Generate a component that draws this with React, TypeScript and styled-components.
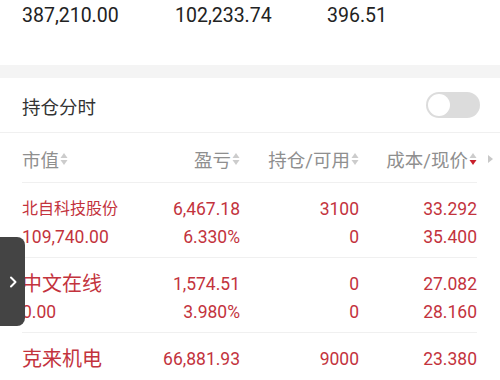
import styled, { createGlobalStyle } from "styled-components";

const GlobalStyle = createGlobalStyle`
  html, body {
    margin: 0;
    padding: 0;
    background: #ffffff;
  }
  body {
    font-family: Roboto, "Noto Sans CJK SC", sans-serif;
    -webkit-font-smoothing: antialiased;
  }
`;

const RED = "#c3333d";

const Page = styled.div`
  position: relative;
  width: 500px;
  height: 380px;
  overflow: hidden;
  background: #ffffff;
`;

const Summary = styled.div`
  display: grid;
  grid-template-columns: 153px 152px 1fr;
  padding: 3px 0 0 22px;
  height: 65px;
  box-sizing: border-box;
`;

const SummaryValue = styled.div`
  font-size: 19.5px;
  line-height: 26px;
  color: #222222;
`;

const Band = styled.div`
  height: 13px;
  background: #f4f4f4;
`;

const ToggleRow = styled.div`
  display: flex;
  align-items: center;
  justify-content: space-between;
  height: 55px;
  padding: 0 20px 0 22px;
  border-bottom: 1px solid #f0f0f0;
  box-sizing: border-box;
`;

const ToggleLabel = styled.div`
  font-size: 18.5px;
  color: #333333;
  padding-top: 2px;
`;

const Switch = styled.div`
  position: relative;
  width: 54px;
  height: 26px;
  border-radius: 13px;
  background: #dcdcdc;
`;

const Knob = styled.div`
  position: absolute;
  top: 2px;
  left: 2px;
  width: 22px;
  height: 22px;
  border-radius: 50%;
  background: #ffffff;
`;

const Table = styled.div`
  padding: 0 23px 0 22px;
`;

const HeadRow = styled.div`
  display: grid;
  grid-template-columns: 120px 98px 119px 118px;
  align-items: center;
  height: 50px;
  padding-top: 2px;
  box-sizing: border-box;
  border-bottom: 1px solid #f0f0f0;
`;

const HeadCell = styled.div<{ $right?: boolean }>`
  display: flex;
  align-items: center;
  justify-content: ${(p) => (p.$right ? "flex-end" : "flex-start")};
  font-size: 18.5px;
  color: #8f8f8f;
  gap: 1px;
  position: relative;
`;

const MoreArrow = styled.span`
  position: absolute;
  right: -16px;
  top: 50%;
  margin-top: -4px;
  width: 0;
  height: 0;
  border-top: 4px solid transparent;
  border-bottom: 4px solid transparent;
  border-left: 5px solid #c8c8c8;
`;

const Row = styled.div`
  display: grid;
  grid-template-columns: 120px 98px 119px 118px;
  grid-auto-rows: 28px;
  align-content: center;
  height: 75px;
  padding-top: 5px;
  box-sizing: border-box;
  border-bottom: 1px solid #f0f0f0;
  color: ${RED};
`;

const Name = styled.div<{ $small?: boolean }>`
  font-size: ${(p) => (p.$small ? "16px" : "20px")};
  line-height: 28px;
  white-space: nowrap;
`;

const Cell = styled.div<{ $left?: boolean }>`
  font-size: 17.5px;
  line-height: 28px;
  text-align: ${(p) => (p.$left ? "left" : "right")};
  white-space: nowrap;
`;

const SideTab = styled.div`
  position: absolute;
  left: 0;
  top: 237px;
  width: 25px;
  height: 89px;
  background: #444444;
  border-radius: 0 8px 8px 0;
  display: flex;
  align-items: center;
  justify-content: center;
`;

const SortIcon = ({ active }: { active?: boolean }) => (
  <svg width="8" height="14" viewBox="0 0 8 14">
    <path d="M4 1 L7.5 6 H0.5 Z" fill="#cccccc" />
    <path d="M4 13 L7.5 8 H0.5 Z" fill={active ? "#c8202c" : "#cccccc"} />
  </svg>
);

type Holding = {
  name: string;
  small?: boolean;
  value: string;
  pl: string;
  plPct: string;
  qty: string;
  avail: string;
  cost: string;
  price: string;
};

const holdings: Holding[] = [
  {
    name: "北自科技股份",
    small: true,
    value: "109,740.00",
    pl: "6,467.18",
    plPct: "6.330%",
    qty: "3100",
    avail: "0",
    cost: "33.292",
    price: "35.400",
  },
  {
    name: "中文在线",
    value: "0.00",
    pl: "1,574.51",
    plPct: "3.980%",
    qty: "0",
    avail: "0",
    cost: "27.082",
    price: "28.160",
  },
  {
    name: "克来机电",
    value: "277,470.00",
    pl: "66,881.93",
    plPct: "31.810%",
    qty: "9000",
    avail: "9000",
    cost: "23.380",
    price: "30.830",
  },
];

export default function App() {
  return (
    <Page>
      <GlobalStyle />
      <Summary>
        <SummaryValue>387,210.00</SummaryValue>
        <SummaryValue>102,233.74</SummaryValue>
        <SummaryValue>396.51</SummaryValue>
      </Summary>
      <Band />
      <ToggleRow>
        <ToggleLabel>持仓分时</ToggleLabel>
        <Switch>
          <Knob />
        </Switch>
      </ToggleRow>
      <Table>
        <HeadRow>
          <HeadCell>
            市值
            <SortIcon />
          </HeadCell>
          <HeadCell $right>
            盈亏
            <SortIcon />
          </HeadCell>
          <HeadCell $right>
            持仓/可用
            <SortIcon />
          </HeadCell>
          <HeadCell $right>
            成本/现价
            <SortIcon active />
            <MoreArrow />
          </HeadCell>
        </HeadRow>
        {holdings.map((h) => (
          <Row key={h.name}>
            <Name $small={h.small}>{h.name}</Name>
            <Cell>{h.pl}</Cell>
            <Cell>{h.qty}</Cell>
            <Cell>{h.cost}</Cell>
            <Cell $left>{h.value}</Cell>
            <Cell>{h.plPct}</Cell>
            <Cell>{h.avail}</Cell>
            <Cell>{h.price}</Cell>
          </Row>
        ))}
      </Table>
      <SideTab>
        <svg width="10" height="14" viewBox="0 0 10 14">
          <path
            d="M3 2.5 L7.5 7 L3 11.5"
            fill="none"
            stroke="#ffffff"
            strokeWidth="2"
            strokeLinecap="round"
            strokeLinejoin="round"
          />
        </svg>
      </SideTab>
    </Page>
  );
}
